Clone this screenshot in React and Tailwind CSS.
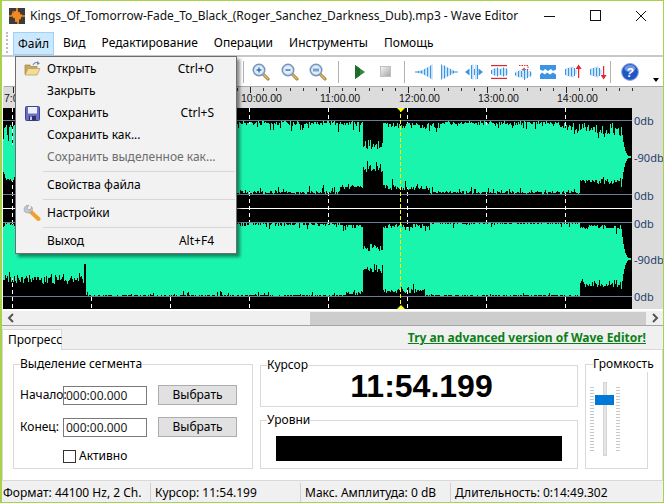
import React from 'react';

// small seeded random so the wave form is the same on each load
function makeRand(seed) {
  let s = seed;
  return () => {
    s = (s + 0x6d2b79f5) | 0;
    let t = Math.imul(s ^ (s >>> 15), 1 | s);
    t = (t + Math.imul(t ^ (t >>> 7), 61 | t)) ^ t;
    return ((t ^ (t >>> 14)) >>> 0) / 4294967296;
  };
}

const rnd = makeRand(77);

function spikes(min, max, chance, extra) {
  let d = min + rnd() * (max - min);
  if (rnd() < chance) d += rnd() * extra;
  return d;
}

function depthTop1(x) {
  if (x < 86) return spikes(3, 9, 0.2, 20);
  if (x < 363) return spikes(1, 5, 0.12, 8) + (rnd() < 0.02 ? 14 : 0);
  if (x < 383) return spikes(20, 30, 0.3, 8);
  if (x < 440) return spikes(2, 8, 0.15, 6) + (x > 420 && rnd() < 0.03 ? 14 : 0);
  if (x < 560) return spikes(1, 5, 0.15, 5);
  return spikes(3, 9 + (x - 560) / 8, 0.15, 6);
}
function depthBottom1(x) {
  if (x < 86) return spikes(12, 18, 0.2, 8);
  if (x < 340) return spikes(0, 3, 0.12, 7);
  if (x < 363) return spikes(5, 9, 0.1, 3);
  if (x < 383) return spikes(22, 28, 0.3, 6);
  if (x < 430) return spikes(4, 9, 0.15, 8);
  if (x < 580) return spikes(0, 3, 0.1, 5);
  return spikes(10, 14, 0.3, 6);
}
function depthTop2(x) {
  if (x < 340) return spikes(0, 4, 0.1, 5);
  if (x < 363) return spikes(2, 6, 0.1, 5);
  if (x < 383) return spikes(22, 29, 0.2, 2);
  if (x < 430) return spikes(2, 6, 0.15, 8) + (x > 420 && rnd() < 0.05 ? 10 : 0);
  if (x < 580) return spikes(0, 2.5, 0.12, 4);
  return spikes(3, 7, 0.15, 7);
}
function depthBottom2(x) {
  if (x < 84) return spikes(12, 20, 0.25, 6);
  if (x < 86) return 32;
  if (x < 345) return spikes(0, 1, 0.08, 5);
  if (x < 363) return spikes(1, 4, 0.1, 3);
  if (x < 383) return spikes(22, 28, 0.3, 5);
  if (x < 425) return spikes(3, 7, 0.15, 8);
  if (x < 580) return spikes(0, 1, 0.06, 3);
  return spikes(9, 13, 0.25, 6);
}

function buildChannel(top, bottom, fnTop, fnBottom) {
  const mid = (top + bottom) / 2;
  const half = (bottom - top) / 2;
  let d = '';
  for (let x = 3; x < 631; x++) {
    let a = Math.round(top + fnTop(x));
    let b = Math.round(bottom - fnBottom(x));
    if (x >= 621) {
      const h = Math.max(0.7, half * 0.8 * Math.pow((631 - x) / 10, 3));
      a = mid - h;
      b = mid + h;
    }
    d += `M${x - 2.5} ${a - 108}V${b - 108}`;
  }
  return d;
}

const channel1 = buildChannel(120, 194, depthTop1, depthBottom1);
const channel2 = buildChannel(222, 296, depthTop2, depthBottom2);
const majorTicks = [12, 91, 170, 249, 328, 407, 486, 565];
const rulerLabels = ['7:00.00', '8:00.00', '9:00.00', '10:00.00', '11:00.00', '12:00.00', '13:00.00', '14:00.00'];
const minorTicks = Array.from({ length: 48 }, (_, i) => 12 + (i * 79) / 6);

function Ruler() {
  return (
    <svg width="662" height="22" className="block shrink-0" shapeRendering="crispEdges">
      <rect x="0" y="0" width="662" height="22" fill="#dcdcdc" />
      <rect x="1" y="0" width="661" height="1" fill="#a9a9a9" />
      <rect x="0" y="0" width="1" height="22" fill="#dcdcdc" />
      {minorTicks.map((x) => (
        <rect key={x} x={Math.round(x) - 2} y="2" width="1" height="3" fill="#333" />
      ))}
      {majorTicks.map((x) => (
        <rect key={x} x={x - 2} y="1" width="1" height="6" fill="#222" />
      ))}
      {majorTicks.map((x, i) => (
        <text key={x} x={i === 0 ? 1 : x - 11} y="16" fontSize="10.5" fill="#111" fontFamily="'Liberation Sans', sans-serif" shapeRendering="auto">
          {rulerLabels[i]}
        </text>
      ))}
    </svg>
  );
}

function WaveView() {
  const zeroLines = [12, 86, 114, 188];
  return (
    <svg width="629" height="201" className="block shrink-0" shapeRendering="crispEdges">
      <rect width="629" height="201" fill="#000" />
      {majorTicks.map((x) => (
        <line key={x} x1={x - 2.5} x2={x - 2.5} y1="0" y2="201" stroke="#fff" strokeDasharray="4 3" />
      ))}
      <path d={channel1} stroke="#1af5ae" strokeWidth="1" fill="none" />
      <path d={channel2} stroke="#1af5ae" strokeWidth="1" fill="none" />
      {zeroLines.map((y) => (
        <rect key={y} x="0" y={y} width="629" height="1" fill="#6d7c9e" />
      ))}
      <rect x="0" y="100" width="629" height="1" fill="#fff" />
      <line x1="397.5" x2="397.5" y1="0" y2="201" stroke="#ffff00" strokeDasharray="4 2" />
      <polygon points="394,0 402,0 398,4" fill="#ffff00" shapeRendering="auto" />
      <polygon points="394,201 402,201 398,197" fill="#ffff00" shapeRendering="auto" />
    </svg>
  );
}

function ScaleColumn() {
  const cls = 'text-[11px] leading-[13px] text-[#24406e] pl-[2px] h-[13px]';
  return (
    <div className="w-[31px] h-[201px] bg-[#dcdcdc] flex flex-col">
      <div className={`${cls} mt-[6px]`}>0db</div>
      <div className={`${cls} mt-[24px]`}>-90db</div>
      <div className={`${cls} mt-[25px]`}>0db</div>
      <div className={`${cls} mt-[15px]`}>0db</div>
      <div className={`${cls} mt-[23px]`}>-90db</div>
      <div className={`${cls} mt-[24px]`}>0db</div>
    </div>
  );
}

function AppIcon() {
  return (
    <svg width="16" height="16" viewBox="0 0 16 16" className="block">
      <rect x="0" y="0" width="16" height="16" fill="#3d3a38" />
      <path d="M0 8H3L4 5L5 10L6 3L7 14L8 0L9 16L10 4L11 11L12 7L13 8H16" stroke="#f08a24" strokeWidth="1.6" fill="none" />
    </svg>
  );
}

function Magnifier({ children }) {
  return (
    <svg width="18" height="18" viewBox="0 0 18 18" className="block">
      <line x1="11" y1="11" x2="16" y2="16" stroke="#8a6a2a" strokeWidth="3" strokeLinecap="round" />
      <line x1="11" y1="11" x2="16" y2="16" stroke="#e6c468" strokeWidth="1.5" strokeLinecap="round" />
      <circle cx="7" cy="7" r="5.8" fill="#c9def2" stroke="#7b94b5" strokeWidth="1.4" />
      <circle cx="7" cy="7" r="3.8" fill="#e6f0fa" />
      {children}
    </svg>
  );
}

function Bars({ heights, x = 0, color = '#3d94e4', y = 9 }) {
  return (
    <>
      {heights.map((h, i) => (
        <rect key={i} x={x + i * 1.5} y={y - h / 2} width={i % 2 ? 0.9 : 1} height={h} fill={i % 2 ? '#8cc4f2' : color} />
      ))}
    </>
  );
}

function WaveIcon({ children }) {
  return (
    <svg width="18" height="18" viewBox="0 0 18 18" className="block">
      {children}
    </svg>
  );
}

const toolbarIcons = [
  <WaveIcon key="1">
    <rect x="0" y="8.5" width="8" height="1" fill="#3d94e4" />
    <Bars x={3} heights={[2, 3, 3, 5, 6, 8, 9, 11, 13, 15]} />
  </WaveIcon>,
  <WaveIcon key="2">
    <rect x="10" y="8.5" width="8" height="1" fill="#3d94e4" />
    <Bars x={1} heights={[15, 13, 13, 11, 9, 8, 6, 5, 3, 2]} />
  </WaveIcon>,
  <WaveIcon key="3">
    <Bars x={6} heights={[14, 15, 6, 15, 14]} />
    <polygon points="0,9 4.5,5.5 4.5,12.5" fill="#3d94e4" />
    <polygon points="18,9 13.5,5.5 13.5,12.5" fill="#3d94e4" />
  </WaveIcon>,
  <WaveIcon key="4">
    <rect x="1" y="2" width="16" height="1.2" fill="#e5262a" />
    <rect x="1" y="14.8" width="16" height="1.2" fill="#e5262a" />
    <Bars x={1} heights={[4, 6, 7, 8, 9, 7, 6, 8, 9, 8, 7, 5]} />
  </WaveIcon>,
  <WaveIcon key="5">
    <path d="M5 2.5H14V6.5H10" stroke="#e5262a" strokeWidth="1" strokeDasharray="1.5 1" fill="none" />
    <polygon points="7.5,6.5 11,4.5 11,8.5" fill="#e5262a" />
    <Bars x={1} y={11} heights={[3, 5, 6, 8, 6, 9, 12, 10, 8, 6, 5, 3]} />
  </WaveIcon>,
  <WaveIcon key="6">
    <rect x="1" y="2" width="16" height="14" fill="#3d94e4" />
    <path d="M1 6.5L4 8L6 6L9 8L12 6L14 8L17 6.5V11.5L14 9.5L11 11.5L8 9.5L6 11.5L3 9.5L1 11.5Z" fill="#fff" />
  </WaveIcon>,
  <WaveIcon key="7">
    <Bars x={1} heights={[6, 8, 8, 10, 9, 11, 8, 5]} />
    <rect x="14" y="5" width="1.2" height="10" fill="#e5262a" />
    <polygon points="14.6,1.5 11.6,6 17.6,6" fill="#e5262a" />
  </WaveIcon>,
  <WaveIcon key="8">
    <Bars x={1} heights={[6, 8, 8, 10, 9, 11, 8, 5]} />
    <rect x="14" y="3" width="1.2" height="10" fill="#e5262a" />
    <polygon points="14.6,16.5 11.6,12 17.6,12" fill="#e5262a" />
  </WaveIcon>,
];

function Toolbar() {
  const Sep = ({ cls }) => <div className={`w-px h-[22px] bg-[#b4b4b4] ${cls}`} />;
  return (
    <div className="h-[29px] shrink-0 flex items-center pl-[241px] relative">
      <Sep cls="" />
      <div className="flex w-[75px] ml-[8px] justify-between">
        <Magnifier>
          <path d="M4.5 7H9.5M7 4.5V9.5" stroke="#2f6fc0" strokeWidth="1.4" />
        </Magnifier>
        <Magnifier>
          <path d="M4.5 7H9.5" stroke="#2f6fc0" strokeWidth="1.4" />
        </Magnifier>
        <Magnifier>
          <path d="M5 5.5V8.5M7 5.5V8.5M9 5.5V8.5" stroke="#2f6fc0" strokeWidth="1.2" />
        </Magnifier>
      </div>
      <Sep cls="ml-[11px]" />
      <svg width="12" height="14" viewBox="0 0 12 14" className="block ml-[15px]">
        <polygon points="1,0 11,7 1,14" fill="#2e8b3a" />
        <polygon points="1,0 6,3.5 6,10.5 1,14" fill="#1f6b2a" />
      </svg>
      <div className="w-[11px] h-[11px] ml-[14px] bg-gradient-to-br from-[#f4f4f4] to-[#a8a8a8] border border-[#c0c0c0]" />
      <Sep cls="ml-[13px]" />
      <div className="flex w-[192px] ml-[10px] justify-between">{toolbarIcons}</div>
      <Sep cls="ml-[3px]" />
      <svg width="18" height="18" viewBox="0 0 18 18" className="block ml-[10px]">
        <circle cx="9" cy="9" r="8.4" fill="#1f55c4" stroke="#8aa8d8" strokeWidth="1" />
        <ellipse cx="9" cy="5.5" rx="5.5" ry="3.4" fill="#6d97e4" />
        <text x="9" y="13.5" textAnchor="middle" fontSize="12" fontWeight="700" fontStyle="italic" fill="#fff" fontFamily="'Liberation Sans', sans-serif">?</text>
      </svg>
      <div className="ml-[14px] mt-[16px] w-0 h-0 border-x-[3.5px] border-x-transparent border-t-[4px] border-t-black" />
    </div>
  );
}

function FolderIcon() {
  return (
    <svg width="17" height="16" viewBox="0 0 17 16" className="block">
      <path d="M1 4H6L7 5.5H13V13H1Z" fill="#c9a858" stroke="#9a8450" strokeWidth="0.7" />
      <path d="M1 14L4 7.5H16L13 14Z" fill="#f3dc98" stroke="#b59a58" strokeWidth="0.7" />
      <path d="M9 4C10 1.5 12 1 14 2" stroke="#6f8aa8" strokeWidth="1.1" fill="none" />
      <polygon points="13,0 16,2.5 13,4" fill="#6f8aa8" />
    </svg>
  );
}

function FloppyIcon() {
  return (
    <svg width="15" height="15" viewBox="0 0 15 15" className="block">
      <rect x="0.5" y="0.5" width="14" height="14" rx="1" fill="#6a6fc4" stroke="#42458c" />
      <rect x="3" y="1" width="9" height="6.5" fill="#eef0fa" />
      <rect x="4" y="10" width="7" height="4.5" fill="#2e3066" />
      <rect x="5" y="10.5" width="2" height="3.5" fill="#c9cce8" />
    </svg>
  );
}

function WrenchIcon() {
  return (
    <svg width="18" height="18" viewBox="0 0 18 18" className="block">
      <line x1="7" y1="7" x2="15.5" y2="15" stroke="#f0a030" strokeWidth="4" strokeLinecap="round" />
      <path d="M6 1.5L4 4L5.5 6L8 5L8.5 2.5C10 4 9.5 7 8 8C6 9.5 3 9 1.5 7.5C0.8 6 1 3 3 1.8C4 1.2 5 1.2 6 1.5Z" fill="#c4c8cf" stroke="#8e939b" strokeWidth="0.6" />
    </svg>
  );
}

function MenuRow({ label, shortcut, icon, disabled }) {
  return (
    <div className="h-[22px] flex items-center relative">
      <div className="w-[31px] flex justify-center pl-[1px] shrink-0">{icon}</div>
      <span className={`ml-[0px] ${disabled ? 'text-[#6d6d6d]' : 'text-black'}`}>{label}</span>
      {shortcut && <span className="ml-auto mr-[22px]">{shortcut}</span>}
    </div>
  );
}

function MenuSep() {
  return (
    <div className="h-[6px] flex items-center pl-[27px] pr-[1px]">
      <div className="h-px w-full bg-[#d7d7d7]" />
    </div>
  );
}

function FileMenu() {
  return (
    <div className="absolute left-[13px] top-[55px] w-[222px] h-[198px] bg-[#f2f2f2] border border-[#6e6e6e] py-[1px] shadow-[3px_3px_3px_rgba(0,0,0,0.45)] z-10">
      <MenuRow label="Открыть" shortcut="Ctrl+O" icon={<FolderIcon />} />
      <MenuRow label="Закрыть" />
      <MenuRow label="Сохранить" shortcut="Ctrl+S" icon={<FloppyIcon />} />
      <MenuRow label="Сохранить как..." />
      <MenuRow label="Сохранить выделенное как..." disabled />
      <MenuSep />
      <MenuRow label="Свойства файла" />
      <MenuSep />
      <MenuRow label="Настройки" icon={<WrenchIcon />} />
      <MenuSep />
      <MenuRow label="Выход" shortcut="Alt+F4" />
    </div>
  );
}

function GroupBox({ title, className, titleClass = 'left-[6px]', children }) {
  return (
    <div className={`relative border border-[#d9d9d9] ${className}`}>
      <span className={`absolute -top-[9px] bg-white leading-[16px] whitespace-nowrap ${titleClass}`}>{title}</span>
      {children}
    </div>
  );
}

function SegmentRow({ label, className }) {
  return (
    <div className={`flex items-center h-[20px] ${className}`}>
      <span className="w-[43px] shrink-0">{label}</span>
      <input
        readOnly
        value="000:00.000"
        className="w-[84px] h-[19px] border border-[#7a7a7a] px-[2px] text-[12px] text-[#1a1a1a] outline-none"
      />
      <button className="w-[79px] h-[20px] ml-[11px] bg-[#e1e1e1] border border-[#adadad]">Выбрать</button>
    </div>
  );
}

function VolumeSlider() {
  const ticks = Array.from({ length: 22 }, (_, i) => i);
  return (
    <div className="relative w-[30px] h-[74px] ml-[4px] mt-[17px] flex justify-between mx-auto">
      <div className="flex flex-col gap-[2px] pt-[5px]">
        {ticks.map((t) => (
          <div key={t} className="w-[4px] h-px bg-[#c8c8c8]" />
        ))}
      </div>
      <div className="w-[4px] h-[74px] bg-[#e4e4e4] border border-[#d6d6d6]" />
      <div className="flex flex-col gap-[2px] pt-[5px]">
        {ticks.map((t) => (
          <div key={t} className="w-[4px] h-px bg-[#c8c8c8]" />
        ))}
      </div>
      <div className="absolute left-[5px] top-[13px] w-[19px] h-[10px] bg-[#0078d7]" />
    </div>
  );
}

export default function App() {
  return (
    <div className="relative w-[664px] h-[503px] overflow-hidden bg-white border-t border-b border-l-2 border-r border-[#a8d24c] flex flex-col text-[12px] leading-[16px] text-black font-['Noto_Sans',sans-serif]">
      {/* title bar */}
      <div className="h-[29px] shrink-0 flex items-center pl-[7px]">
        <AppIcon />
        <span className="ml-[5px] text-[12px] text-[#111] whitespace-nowrap">
          Kings_Of_Tomorrow-Fade_To_Black_(Roger_Sanchez_Darkness_Dub).mp3 - Wave Editor
        </span>
        <svg width="120" height="14" viewBox="0 0 120 14" className="ml-auto mr-[16px] shrink-0" shapeRendering="crispEdges">
          <rect x="17" y="7" width="11" height="1" fill="#111" />
          <rect x="63.5" y="1.5" width="10" height="10" fill="none" stroke="#111" />
          <path d="M109 2L119 12M119 2L109 12" stroke="#111" fill="none" shapeRendering="auto" />
        </svg>
      </div>

      {/* menu bar */}
      <div className="h-[25px] shrink-0 flex items-center relative pl-[11px]">
        <div className="absolute left-[4px] top-[2px] h-[21px] w-[2px] border-l-2 border-dotted border-[#bcbcbc]" />
        <div className="h-[23px] w-[41px] mt-[2px] bg-[#cce8ff] border border-[#99d1ff] flex items-center pl-[4px]">Файл</div>
        <div className="flex ml-[1px]">
          <span className="px-[8px]">Вид</span>
          <span className="px-[8px]">Редактирование</span>
          <span className="px-[8px]">Операции</span>
          <span className="px-[8px]">Инструменты</span>
          <span className="px-[8px]">Помощь</span>
        </div>
      </div>
      <div className="h-[2px] shrink-0 bg-[#c8c8c8]" />

      <Toolbar />
      <div className="pl-[1px]">
        <Ruler />
      </div>
      <div className="flex shrink-0 pl-[1px]">
        <WaveView />
        <ScaleColumn />
      </div>
      <div className="h-[2px] shrink-0 bg-white" />

      {/* horizontal scroll bar */}
      <div className="h-[14px] shrink-0 bg-[#f0f0f0] flex items-center">
        <svg width="10" height="10" viewBox="0 0 10 10" className="ml-[4px] shrink-0">
          <path d="M7 1L3 5L7 9" stroke="#555" strokeWidth="2" fill="none" />
        </svg>
        <div className="ml-[294px] w-[336px] h-[13px] bg-[#cdcdcd]" />
        <svg width="10" height="10" viewBox="0 0 10 10" className="ml-[4px] shrink-0">
          <path d="M3 1L7 5L3 9" stroke="#555" strokeWidth="2" fill="none" />
        </svg>
      </div>
      <div className="h-px shrink-0 bg-[#a5a5a5]" />

      {/* tabs */}
      <div className="h-[23px] shrink-0 bg-[#f0f0f0] flex items-end relative z-0">
        <div className="w-[60px] h-[21px] bg-white border border-b-0 border-[#d9d9d9] pl-[5px] leading-[19px] -mb-px relative z-10">Прогресс</div>
        <a className="ml-auto mr-[17px] mb-[3px] font-bold underline text-[#0b7f17] whitespace-nowrap">Try an advanced version of Wave Editor!</a>
      </div>
      <div className="h-[132px] shrink-0 bg-white border border-[#d9d9d9] pt-[14px] pl-[10px] flex gap-[7px]">
        <GroupBox title="Выделение сегмента" className="w-[240px] h-[105px] pt-[20px] pl-[6px]">
          <SegmentRow label="Начало:" />
          <SegmentRow label="Конец:" className="mt-[12px]" />
          <div className="flex items-center mt-[11px] ml-[43px]">
            <div className="w-[13px] h-[13px] border border-[#333]" />
            <span className="ml-[3px]">Активно</span>
          </div>
        </GroupBox>
        <div className="w-[318px] flex flex-col pt-[1px]">
          <GroupBox title="Курсор" className="h-[42px] flex items-center justify-center pl-[5px]">
            <span className="text-[32px] font-bold leading-none font-['Liberation_Sans',sans-serif]">11:54.199</span>
          </GroupBox>
          <GroupBox title="Уровни" className="h-[49px] mt-[13px] pt-[15px] px-[15px]">
            <div className="h-[25px] bg-black" />
          </GroupBox>
        </div>
        <GroupBox title="Громкость" className="w-[63px] h-[105px]" titleClass="left-[7px]">
          <VolumeSlider />
        </GroupBox>
      </div>
      <div className="h-[2px] shrink-0 bg-[#f0f0f0]" />

      {/* status bar */}
      <div className="flex-1 bg-[#f0f0f0] flex items-center relative">
        <div className="w-[149px] pl-[1px] border-r border-[#d0d0d0] h-full flex items-center">Формат: 44100 Hz, 2 Ch.</div>
        <div className="w-[150px] pl-[4px] border-r border-[#d0d0d0] h-full flex items-center">Курсор: 11:54.199</div>
        <div className="w-[150px] pl-[4px] border-r border-[#d0d0d0] h-full flex items-center">Макс. Амплитуда: 0 dB</div>
        <div className="pl-[4px] h-full flex items-center whitespace-nowrap">Длительность: 0:14:49.302</div>
      </div>

      <FileMenu />
    </div>
  );
}
